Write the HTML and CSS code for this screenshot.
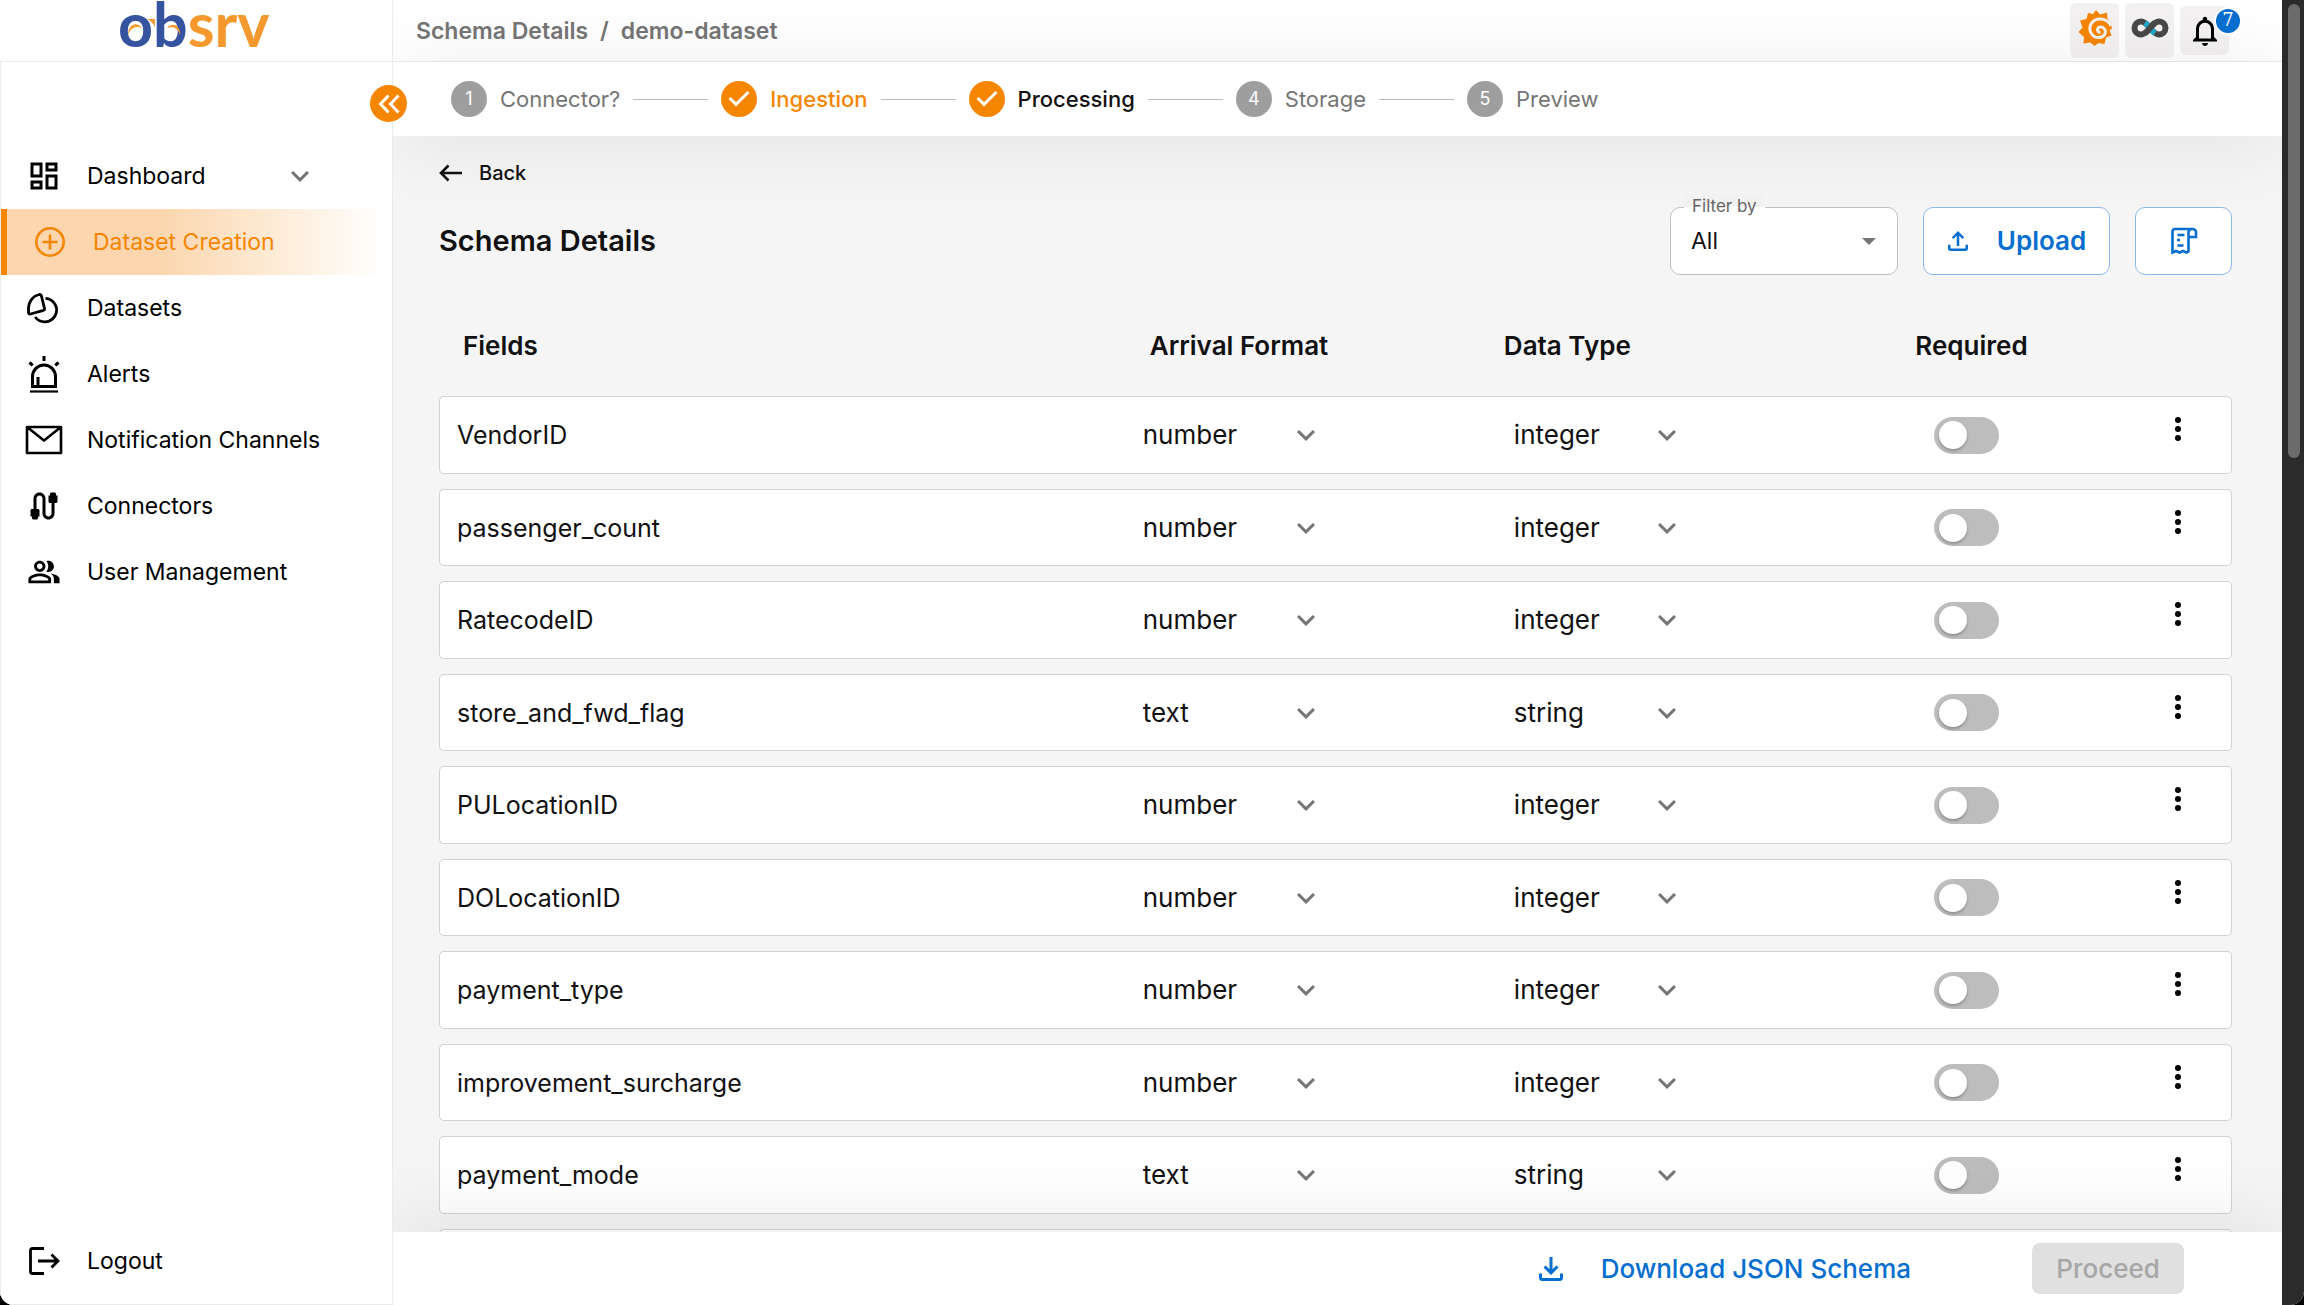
FILE: index.html
```html
<!DOCTYPE html>
<html lang="en">
<head>
<meta charset="utf-8">
<title>Obsrv - Schema Details</title>
<meta name="viewport" content="width=device-width, initial-scale=1">
<link rel="stylesheet" href="styles.css">
</head>
<body>
<svg class="sprite" aria-hidden="true">
  <symbol id="chevron" viewBox="0 0 24 24"><path d="M7.41 8.59 12 13.17l4.59-4.58L18 10l-6 6-6-6z"/></symbol>
  <symbol id="more" viewBox="0 0 24 24"><circle cx="12" cy="6" r="2"/><circle cx="12" cy="12" r="2"/><circle cx="12" cy="18" r="2"/></symbol>
  <symbol id="done" viewBox="0 0 24 24"><path d="M12 0a12 12 0 1 0 0 24 12 12 0 0 0 0-24zm-2 17l-5-5 1.4-1.4 3.6 3.6 7.6-7.6L19 8l-9 9z"/></symbol>
</svg>
<div class="app">
  <aside class="sidebar">
    <div class="brand">
      <svg class="logo" viewBox="0 0 160 50" role="img" aria-label="obsrv">
        <text class="logo-text" x="-1" y="43"><tspan class="logo-blue">ob</tspan><tspan class="logo-orange">srv</tspan></text>
        <path class="logo-orange" d="M28 15h8v8c-2-4-4-6-8-8z"/>
        <path class="logo-orange" d="M9 31C9 20 18 17 23 24C17 22 12 23 9 31zM48 24C54 17 62 22 61 31C59 24 54 22 48 24z"/>
      </svg>
    </div>
    <nav class="nav" aria-label="Main">
      <a class="nav-item" href="#"><span class="nav-icon"><svg width="36" height="36" viewBox="0 0 24 24"><path d="M19 5v2h-4V5h4M9 5v6H5V5h4m10 8v6h-4v-6h4M9 17v2H5v-2h4M21 3h-8v6h8V3zM11 3H3v10h8V3zm10 8h-8v10h8V11zm-10 4H3v6h8v-6z"/></svg></span><span class="nav-label">Dashboard</span><svg class="chev" width="36" height="36"><use href="#chevron"/></svg></a>
      <a class="nav-item active" href="#" aria-current="page"><span class="nav-icon"><svg width="32" height="32" viewBox="0 0 32 32" fill="none" stroke="currentColor" stroke-width="2.6"><circle cx="16" cy="16" r="13.7"/><path d="M16 8.500v15M8.500 16h15"/></svg></span><span class="nav-label">Dataset Creation</span></a>
      <a class="nav-item" href="#"><span class="nav-icon"><svg width="36" height="36" viewBox="0 0 36 36" fill="none" stroke="currentColor" stroke-width="2.800" stroke-linejoin="round"><path d="M13.500 4.500 C6 6 1.500 13 2.600 23 Q3 24.300 4.500 24 L17.500 20.300 Q18.800 19.800 18.500 18.500 L15.300 5.500 Q14.800 4.300 13.500 4.500z"/><path d="M19.500 8.300a11.800 11.800 0 1 1-10.300 18.700"/></svg></span><span class="nav-label">Datasets</span></a>
      <a class="nav-item" href="#"><span class="nav-icon"><svg width="36" height="38" viewBox="0 0 36 38" fill="none" stroke="currentColor" stroke-width="3"><path d="M6.500 31.500V21.500a11.500 11.500 0 0 1 23 0v10z"/><path d="M12 31v-9M18 1v5M3.500 7.500l3.200 2.800M32.500 7.500l-3.200 2.800"/><path stroke-width="2.200" d="M4 36.500h28"/></svg></span><span class="nav-label">Alerts</span></a>
      <a class="nav-item" href="#"><span class="nav-icon"><svg width="38" height="30" viewBox="0 0 38 30" fill="none" stroke="currentColor" stroke-width="2.600" stroke-linejoin="round"><path d="M2 2h34v26H2zM2 2l17 13.500L36 2"/></svg></span><span class="nav-label">Notification Channels</span></a>
      <a class="nav-item" href="#"><span class="nav-icon"><svg width="36" height="36" viewBox="0 0 24 24"><path d="M20 5V4c0-.55-.45-1-1-1h-2c-.55 0-1 .45-1 1v1h-1v4c0 .55.45 1 1 1h1v7c0 1.100-.9 2-2 2s-2-.9-2-2V7c0-2.210-1.790-4-4-4S5 4.790 5 7v7H4c-.55 0-1 .45-1 1v4h1v1c0 .55.45 1 1 1h2c.55 0 1-.45 1-1v-1h1v-4c0-.55-.45-1-1-1H7V7c0-1.100.9-2 2-2s2 .9 2 2v10c0 2.210 1.790 4 4 4s4-1.790 4-4v-7h1c.55 0 1-.45 1-1V5h-1z"/></svg></span><span class="nav-label">Connectors</span></a>
      <a class="nav-item" href="#"><span class="nav-icon"><svg width="34" height="34" viewBox="0 0 24 24"><path d="M16.670 13.130C18.040 14.060 19 15.320 19 17v3h4v-3c0-2.180-3.570-3.470-6.330-3.870zM15 12c2.210 0 4-1.790 4-4s-1.790-4-4-4c-.47 0-.91.1-1.330.24C14.500 5.270 15 6.580 15 8s-.5 2.730-1.330 3.760c.42.14.86.24 1.330.24zM9 12c2.210 0 4-1.790 4-4s-1.790-4-4-4-4 1.790-4 4 1.790 4 4 4zm0-6c1.100 0 2 .9 2 2s-.9 2-2 2-2-.9-2-2 .9-2 2-2zM9 13c-2.670 0-8 1.340-8 4v3h16v-3c0-2.660-5.330-4-8-4zm6 5H3v-.99C3.200 16.290 6.300 15 9 15s5.800 1.290 6 2v1z"/></svg></span><span class="nav-label">User Management</span></a>
      <a class="nav-item logout" href="#"><span class="nav-icon"><svg width="32" height="30" viewBox="0 0 32 30" fill="none" stroke="currentColor" stroke-width="2.800"><path d="M16 2.500H4.500Q2.500 2.500 2.500 4.500V25.500Q2.500 27.500 4.500 27.500H16M10 15h20M23.500 8.500l6.500 6.500-6.500 6.500"/></svg></span><span class="nav-label">Logout</span></a>
    </nav>
    <button class="collapse" type="button" aria-label="Collapse menu"><svg width="22" height="20" viewBox="0 0 22 20" fill="none" stroke="currentColor" stroke-width="3"><path d="M10.500 1.500 2.500 10l8 8.500M20.500 1.500l-8 8.500 8 8.500"/></svg></button>
  </aside>

  <div class="page">
    <header class="topbar">
      <nav class="crumbs" aria-label="Breadcrumb"><a href="#">Schema Details</a><span>/</span><a href="#">demo-dataset</a></nav>
      <div class="tools">
        <button class="tool link" type="button" aria-label="Grafana"><svg width="36" height="38" viewBox="0 0 36 38"><path fill="#f68500" d="M19 1l4 4.500 7-2 .5 6.500c3 3 4.500 6.500 4.300 10l-2.300 1 2 5.500-5.500 2-1.500 6.500-6-1-4 3-4-3.500-7 1 .5-6.500-5.500-5 4-4.500L3 11.500l6.500-1.500L11 4l5 1z"/><path fill="none" stroke="#f3f1f2" stroke-width="3" d="M34 17C30 8 18 8 14 15C10.500 22 16 29.500 23 28.500C28 27.500 29.500 23 27.500 20C25.500 17 21 17.500 20.500 20.500C20.300 22 21.500 23.500 23.500 23.500"/></svg></button>
        <button class="tool link" type="button" aria-label="Superset"><svg width="38" height="20" viewBox="0 0 38 20" fill="none" stroke-width="6"><path stroke="#484848" d="M19 10C15 5 13 3.500 10 3.500a6.500 6.500 0 0 0 0 13c3 0 5-1.500 9-6.500s6-6.500 9-6.500a6.500 6.500 0 0 1 0 13c-3 0-5-1.500-9-6.500z"/><path stroke="#20a7c9" d="M14 4.800Q16.500 6.600 19 10q2.500 3.400 5 5.200"/><path stroke="#484848" d="M14 15.200Q16.500 13.400 19 10q2.500-3.400 5-5.200"/></svg></button>
        <button class="tool bell" type="button" aria-label="Notifications, 7 new"><svg width="36" height="36" viewBox="0 0 24 24"><path d="M12 22c1.100 0 2-.9 2-2h-4c0 1.100.9 2 2 2zm6-6v-5c0-3.070-1.630-5.640-4.500-6.320V4c0-.83-.67-1.500-1.500-1.500s-1.500.67-1.500 1.500v.68C7.640 5.360 6 7.920 6 11v5l-2 2v1h16v-1l-2-2zm-2 1H8v-6c0-2.480 1.510-4.500 4-4.500s4 2.020 4 4.500v6z"/></svg><span class="badge">7</span></button>
      </div>
    </header>

    <ol class="stepper">
      <li class="step"><span class="dot">1</span><span>Connector?</span></li>
      <li class="step done"><svg width="36" height="36"><use href="#done"/></svg><span>Ingestion</span></li>
      <li class="step done current" aria-current="step"><svg width="36" height="36"><use href="#done"/></svg><span>Processing</span></li>
      <li class="step"><span class="dot">4</span><span>Storage</span></li>
      <li class="step"><span class="dot">5</span><span>Preview</span></li>
    </ol>

    <main class="content">
      <button class="back" type="button"><svg width="24" height="20" viewBox="0 0 24 20" fill="none" stroke="currentColor" stroke-width="2.600"><path d="M23 10H2.500M9.500 2.500 2 10l7.500 7.500"/></svg>Back</button>
      <div class="heading">
        <h1>Schema Details</h1>
        <div class="actions">
          <div class="filter">
            <label for="filter">Filter by</label>
            <select id="filter"><option>All</option></select>
            <svg width="14" height="7" viewBox="0 0 14 7"><path d="M0 0h14L7 7z"/></svg>
          </div>
          <button class="outlined upload" type="button"><svg width="30" height="30" viewBox="0 0 24 24"><path d="M18 15v3H6v-3H4v3c0 1.100.9 2 2 2h12c1.100 0 2-.9 2-2v-3h-2zM7 9l1.410 1.410L11 7.830V16h2V7.830l2.590 2.580L17 9l-5-5-5 5z"/></svg>Upload</button>
          <button class="outlined doc" type="button" aria-label="View schema"><svg width="28" height="28" viewBox="0 0 28 28" fill="none" stroke="currentColor" stroke-width="2.600"><path d="M22 2H5Q2.500 2 2.500 4.500V25.500l3.500-1.500 3.500 1.500 3.500-1.500 3.500 1.500 2-1V5.500Q18.500 2 22 2q4 0 4 3.500v4.500h-7.500"/><path d="M7.500 8h7M7 13h3M7.500 18.500h6"/></svg></button>
        </div>
      </div>

      <table class="schema">
        <colgroup><col class="c-name"><col class="c-arrival"><col class="c-type"><col class="c-req"><col class="c-more"></colgroup>
        <thead><tr><th>Fields</th><th>Arrival Format</th><th class="th-type">Data Type</th><th>Required</th><td></td></tr></thead>
        <tbody id="rows"></tbody>
      </table>
    </main>

    <footer class="footer">
      <button class="download" type="button"><svg width="36" height="36" viewBox="0 0 24 24"><path d="M18 15v3H6v-3H4v3c0 1.100.9 2 2 2h12c1.100 0 2-.9 2-2v-3h-2zm-1-4-1.410-1.410L13 12.170V4h-2v8.170L8.410 9.590 7 11l5 5 5-5z"/></svg>Download JSON Schema</button>
      <button class="proceed" type="button" disabled>Proceed</button>
    </footer>
  </div>
  <div class="scrollbar" aria-hidden="true"><div class="thumb"></div></div>
</div>
<script src="rows.js"></script>
</body>
</html>
```
FILE: styles.css
```css
:root {
  --orange: #f68500;
  --blue: #056ecf;
  --ink: #111;
  --grey: #757575;
  --line: #d2d2d2;
}
* { box-sizing: border-box; }
html { height: 100%; background: #000; }
body {
  margin: 0;
  height: 100%;
  font-family: Inter, "Open Sans", sans-serif;
  font-size: 23px;
  font-weight: 400;
  line-height: 28px;
  color: var(--ink);
}
button, select { font: inherit; color: inherit; background: none; border: 0; padding: 0; margin: 0; cursor: pointer; }
a { color: inherit; text-decoration: none; }
svg { display: block; flex: none; fill: currentColor; }
svg[fill="none"] { fill: none; }
.sprite { display: none; }

.app { display: flex; height: 100vh; background: #fff; border-radius: 0 0 14px 14px; overflow: hidden; }

.sidebar { position: relative; z-index: 3; flex: none; width: 393px; display: flex; flex-direction: column; background: #fff; border-right: 1px solid #ebebeb; }
.brand { flex: none; height: 62px; padding: 4px 0 0 119px; border-bottom: 1px solid #ebebeb; }
.logo { width: 160px; height: 50px; overflow: visible; }
.logo-text { font: 700 61px Lato, sans-serif; }
.logo-blue { fill: #35539f; }
.logo-orange { fill: #f5992e; }
.nav { flex: 1; display: flex; flex-direction: column; padding: 81px 0 10px; border-left: 1px solid #ebebeb; border-bottom: 1px solid #ebebeb; }
.nav-item { flex: none; display: flex; align-items: center; height: 66px; padding-left: 20px; color: #000; }
.nav-icon { width: 46px; display: flex; justify-content: center; margin-right: 20px; }
.nav-label { flex: 1; }
.nav-item .chev { color: var(--grey); margin-right: 74px; }
.active { color: var(--orange); border-left: 6px solid var(--orange); background: linear-gradient(90deg, #fbd6ae 40%, #fde8d0 65%, #fff 98%); }
.logout { margin-top: auto; }
.collapse { position: absolute; top: 85px; right: -15px; width: 37px; height: 37px; border-radius: 50%; background: var(--orange); color: #fff; display: flex; align-items: center; justify-content: center; }

.page { flex: 1; min-width: 0; display: flex; flex-direction: column; position: relative; overflow: hidden; }
.topbar { flex: none; display: flex; align-items: center; justify-content: space-between; height: 62px; padding: 0 53px 0 23px; border-bottom: 1px solid #ebebeb; }
.crumbs { display: flex; gap: 12px; font-weight: 600; color: var(--grey); }
.tools { display: flex; align-items: center; gap: 6px; }
.tool { position: relative; display: flex; align-items: center; justify-content: center; width: 49px; height: 55px; border-radius: 6px; background: #f3f1f2; color: #000; }
.link { padding-bottom: 6px; }
.bell { height: 49px; }
.badge { position: absolute; top: 3px; right: -11px; width: 24px; height: 24px; border-radius: 50%; background: var(--blue); color: #fff; font: 500 18px/22px "DejaVu Serif", serif; box-shadow: 0 0 0 2px #fff; }

.stepper { position: relative; z-index: 2; flex: none; display: flex; align-items: center; height: 74px; margin: 0; padding: 0 58px; list-style: none; background: #fff; box-shadow: 0 6px 80px rgba(0, 0, 0, .08); font-size: 22px; }
.step { display: flex; align-items: center; gap: 13px; color: var(--grey); }
.step:not(:last-child)::after { content: ""; width: 75px; height: 1px; margin-right: 13px; background: #bdbdbd; }
.dot { width: 36px; height: 36px; border-radius: 50%; background: #9e9e9e; color: #fff; font-size: 18px; line-height: 36px; text-align: center; }
.done { color: var(--orange); font-weight: 500; }
.done svg { color: var(--orange); }
.current { color: var(--ink); }

.content { flex: 1; min-height: 0; overflow: hidden; padding: 23px 50px 0 46px; background: #f5f5f5; }
.back { display: flex; align-items: center; gap: 16px; font-size: 20px; font-weight: 500; }
.heading { display: flex; align-items: center; justify-content: space-between; margin-top: 20px; }
h1 { margin: 0; font-size: 29px; line-height: 32px; font-weight: 600; }
.actions { display: flex; gap: 25px; }
.filter { position: relative; width: 228px; height: 68px; border: 1px solid #c0c0c0; border-radius: 10px; background: #fff; display: flex; align-items: center; }
.filter label { position: absolute; top: -14px; left: 13px; padding: 0 8px; font-size: 17px; line-height: 24px; color: #666; background: linear-gradient(#f3f3f3 56%, #fff 56%); }
select { appearance: none; outline: 0; }
.filter select { width: 100%; height: 100%; padding-left: 20px; }
.filter svg { position: absolute; right: 21px; color: var(--grey); pointer-events: none; }
.outlined { display: flex; align-items: center; justify-content: center; height: 68px; border: 1px solid #8bb8ea; border-radius: 10px; background: #fff; color: var(--blue); font-size: 26px; font-weight: 600; }
.upload { width: 187px; gap: 24px; padding-right: 4px; }
.doc { width: 97px; }

.schema { width: 100%; margin-top: 21px; table-layout: fixed; border-collapse: separate; border-spacing: 0 15px; }
.c-name { width: 38.3%; }
.c-arrival { width: 20.7%; }
.c-type { width: 22%; }
.c-req { width: 13.2%; }
.schema th { height: 70px; padding: 0 0 0 24px; text-align: left; font-size: 26px; font-weight: 600; }
.schema .th-type { padding-left: 7px; }
.schema tbody td { height: 78px; padding: 0 0 0 17px; background: #fff; border: solid var(--line); border-width: 1px 0; font-size: 25px; }
.schema tbody tr:nth-child(even) td { height: 77px; }
.schema tbody td:first-child { border-left-width: 1px; border-radius: 5px 0 0 5px; }
.schema tbody td:last-child { border-right-width: 1px; border-radius: 0 5px 5px 0; }
.pick { display: grid; align-items: center; width: 181px; font-size: 26px; }
.pick > * { grid-area: 1 / 1; }
.pick select { width: 100%; height: 40px; line-height: 38px; }
.pick svg { justify-self: end; color: var(--grey); pointer-events: none; }
.pick.type { width: 171px; }
.switch { appearance: none; display: flex; align-items: center; width: 65px; height: 37px; margin: 0 0 0 26px; padding: 0 5px; border-radius: 19px; background: #bdbdbd; cursor: pointer; }
.switch::before { content: ""; width: 28px; height: 28px; border-radius: 50%; background: #fff; box-shadow: 0 2px 3px rgba(0, 0, 0, .25); }
.more { display: block; margin: 0 0 12px 15px; color: #000; }

.footer { position: relative; z-index: 2; flex: none; display: flex; align-items: center; justify-content: flex-end; gap: 121px; height: 73px; padding: 0 98px 0 0; background: #fff; box-shadow: 0 -4px 80px rgba(0, 0, 0, .1); font-size: 26px; }
.download { display: flex; align-items: center; gap: 32px; color: var(--blue); font-weight: 500; }
.proceed { width: 152px; height: 51px; border-radius: 8px; background: #e0e0e0; color: #a6a6a6; font-weight: 500; }

.scrollbar { flex: none; width: 22px; padding: 4px 4px 4px 6px; background: #2b2b2b; }
.thumb { height: 35%; border-radius: 6px; background: #6b6b6b; }
```
FILE: rows.js
```js
const fields = [
  ["VendorID", "number", "integer"],
  ["passenger_count", "number", "integer"],
  ["RatecodeID", "number", "integer"],
  ["store_and_fwd_flag", "text", "string"],
  ["PULocationID", "number", "integer"],
  ["DOLocationID", "number", "integer"],
  ["payment_type", "number", "integer"],
  ["improvement_surcharge", "number", "integer"],
  ["payment_mode", "text", "string"],
  ["", "number", "integer"],
];

const pick = (kind, name, value) => `
  <div class="pick ${kind}">
    <select aria-label="${kind} of ${name}"><option>${value}</option></select>
    <svg width="36" height="36"><use href="#chevron"/></svg>
  </div>`;

document.getElementById("rows").innerHTML = fields.map(([name, arrival, type]) => `
  <tr>
    <td>${name}</td>
    <td>${pick("arrival", name, arrival)}</td>
    <td>${pick("type", name, type)}</td>
    <td><input class="switch" type="checkbox" role="switch" aria-label="${name} required"></td>
    <td><button class="more" type="button" aria-label="More options"><svg width="36" height="36"><use href="#more"/></svg></button></td>
  </tr>`).join("");
```
